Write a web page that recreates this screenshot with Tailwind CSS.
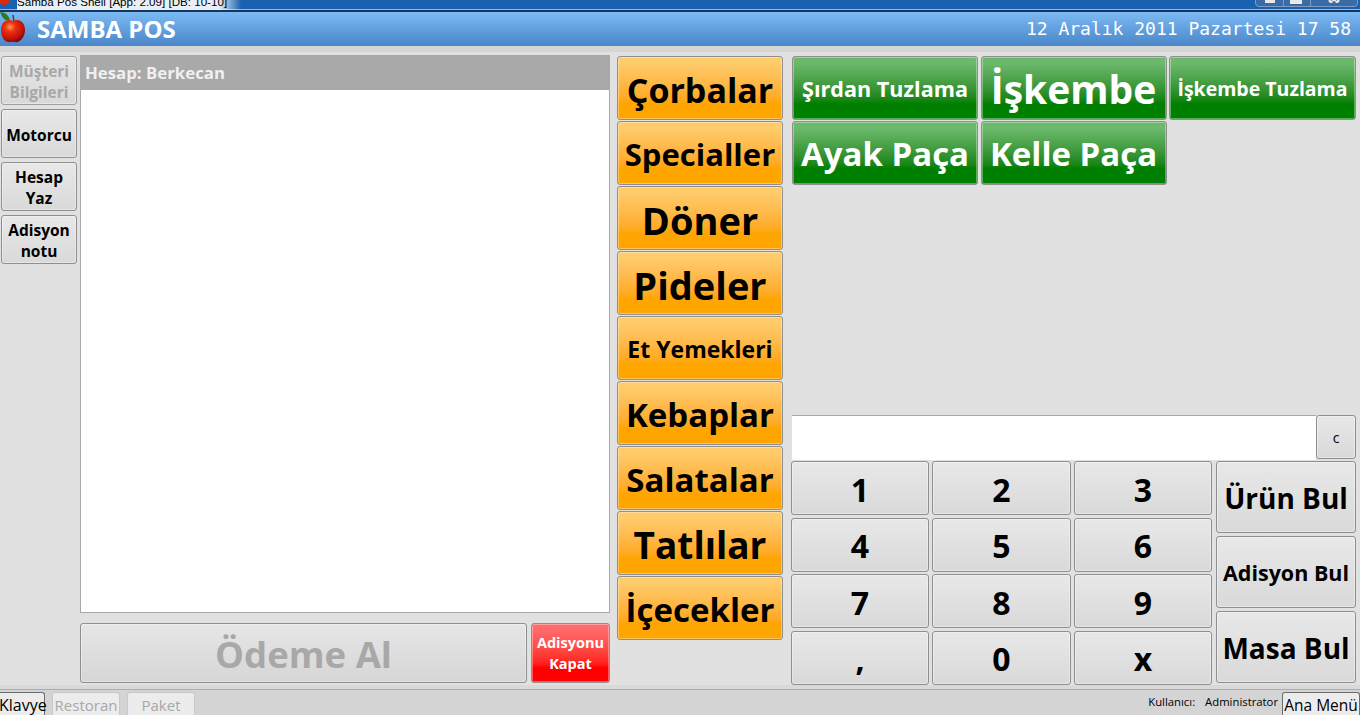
<!DOCTYPE html>
<html lang="tr">
<head>
  <meta charset="UTF-8" />
  <title>Samba POS</title>
  <script src="https://cdn.jsdelivr.net/npm/@tailwindcss/browser@4"></script>
</head>
<body class="bg-[#e1e1e1] font-['Open_Sans','Noto_Sans',sans-serif] overflow-hidden">
<div class="w-[1360px] h-[715px] flex flex-col overflow-hidden">

  <!-- window title, cut off by the capture -->
  <div class="h-[12px] shrink-0 flex justify-between overflow-hidden bg-[#1a62b0] border-b-2 border-[#16365f] shadow-[inset_0_-1px_0_#8fb8e0]">
    <div class="flex">
      <svg class="w-[17px] h-[9px] shrink-0" viewBox="0 0 17 9"><circle cx="4" cy="-1" r="6" fill="#d82a10"/></svg>
      <span class="-mt-[5px] h-[16px] pr-[14px] text-[11.6px] leading-[14px] text-black font-['Liberation_Sans',sans-serif] bg-gradient-to-r from-[#eaf0f6] from-90% to-transparent">Samba Pos Shell [App: 2.09] [DB: 10-10]</span>
    </div>
    <div class="flex h-[8px] mr-[2px] -mt-[1px] border border-[#7d9cc0] rounded-b-[4px] bg-[#3a6ba6]">
      <div class="w-[28px] pl-[9px] border-r border-[#7d9cc0]"><div class="w-[10px] h-[3px] bg-[#e8e8e8]"></div></div>
      <div class="w-[27px] pl-[6px] border-r border-[#7d9cc0]"><div class="w-[12px] h-[4px] bg-[#e8e8e8]"></div></div>
      <div class="w-[46px] flex justify-center">
        <svg class="w-[12px] h-[3px]" viewBox="0 0 12 3"><path d="M1 0 L4 3 M11 0 L8 3 M4 0 H8" stroke="#e8e8e8" stroke-width="2.500"/></svg>
      </div>
    </div>
  </div>

  <!-- header -->
  <header class="h-[34px] shrink-0 flex items-center justify-between bg-gradient-to-b from-[#7cbaf4] to-[#4a86c8]">
    <div class="flex items-center">
      <svg class="w-[26px] h-[33px] -mt-[3px]" viewBox="0 0 26 33">
        <defs>
          <radialGradient id="apple" cx="38%" cy="32%" r="72%">
            <stop offset="0" stop-color="#ff9a50"/><stop offset="0.3" stop-color="#ee3010"/><stop offset="0.75" stop-color="#c01208"/><stop offset="1" stop-color="#7a0606"/>
          </radialGradient>
        </defs>
        <path d="M0 1 C5 1 9 4 10 10 C5 10 2 7 0 1Z" fill="#2e7a22"/>
        <path d="M13 4 L14 11" stroke="#5a3a10" stroke-width="1.500"/>
        <path d="M13 10 C18 7 25 10 25 19 C25 27 19 32 15 31 C13 30.500 12 30.500 10 31 C5 32 1 26 1 19 C1 10 8 7 13 10Z" fill="url(#apple)"/>
      </svg>
      <span class="ml-[11px] text-[24px] font-bold text-white leading-none">SAMBA POS</span>
    </div>
    <span class="pr-[9px] text-[18px] text-white font-['DejaVu_Sans_Mono',monospace] leading-none">12 Aralık 2011 Pazartesi 17 58</span>
  </header>

  <!-- main -->
  <main class="h-[643px] shrink-0 flex pt-[3px] border-t-[6px] border-b-[4px] border-t-[#d6d6d6] border-b-[#d9d9d9]">

    <!-- side buttons -->
    <div class="w-[78px] shrink-0 pl-[1px] pt-[1px] flex flex-col gap-[4px]">
      <button class="w-[76px] h-[49px] pt-[3px] rounded-[3px] border border-[#a0a0a0] bg-gradient-to-b from-[#e6e6e6] to-[#d9d9d9] shadow-[inset_0_0_0_1px_rgba(255,255,255,0.35)] text-[15.5px] leading-[21px] font-bold text-[#a8a8a8]">Müşteri Bilgileri</button>
      <button class="w-[76px] h-[49px] pt-[3px] rounded-[3px] border border-[#8f8f8f] bg-gradient-to-b from-[#e8e8e8] to-[#d9d9d9] shadow-[inset_0_0_0_1px_rgba(255,255,255,0.35)] text-[15.5px] leading-[21px] font-bold text-black">Motorcu</button>
      <button class="w-[76px] h-[49px] pt-[3px] rounded-[3px] border border-[#8f8f8f] bg-gradient-to-b from-[#e8e8e8] to-[#d9d9d9] shadow-[inset_0_0_0_1px_rgba(255,255,255,0.35)] text-[15.5px] leading-[21px] font-bold text-black">Hesap<br>Yaz</button>
      <button class="w-[76px] h-[49px] pt-[3px] rounded-[3px] border border-[#8f8f8f] bg-gradient-to-b from-[#e8e8e8] to-[#d9d9d9] shadow-[inset_0_0_0_1px_rgba(255,255,255,0.35)] text-[15.5px] leading-[21px] font-bold text-black">Adisyon<br>notu</button>
    </div>

    <!-- ticket -->
    <section class="w-[530px] ml-[2px] shrink-0 flex flex-col">
      <div class="h-[35px] shrink-0 flex items-center pl-[5px] bg-[#a9a9a9] text-[16.8px] font-bold text-[#f0f0f0]">Hesap: Berkecan</div>
      <div class="h-[523px] shrink-0 bg-white border border-t-0 border-[#a9a9a9]"></div>
      <div class="mt-[10px] flex gap-[4px]">
        <button class="w-[447px] h-[60px] pt-[3px] rounded-[3px] border border-[#8f8f8f] bg-gradient-to-b from-[#e6e6e6] to-[#d6d6d6] shadow-[inset_0_0_0_1px_rgba(255,255,255,0.35)] text-[36.5px] font-bold text-[#a8a8a8]">Ödeme Al</button>
        <button class="w-[79px] h-[60px] rounded-[3px] border border-[#8f8f8f] bg-gradient-to-b from-[#ff6a6a] from-10% to-[#ff0000] to-75% shadow-[inset_0_0_0_1px_rgba(255,255,255,0.35)] text-[14.5px] leading-[21px] font-bold text-white">Adisyonu Kapat</button>
      </div>
    </section>

    <!-- categories -->
    <div class="w-[166px] ml-[7px] pt-[1px] shrink-0 grid grid-rows-[repeat(9,64px)] gap-y-[1px] h-[585px]">
      <button class="pt-[4px] rounded-[3px] border border-[#8f8f8f] bg-gradient-to-b from-[#ffcb6b] from-10% to-[#ffa500] to-75% shadow-[inset_0_0_0_1px_rgba(255,255,255,0.35)] text-[34px] font-bold text-black">Çorbalar</button>
      <button class="pt-[2px] rounded-[3px] border border-[#8f8f8f] bg-gradient-to-b from-[#ffcb6b] from-10% to-[#ffa500] to-75% shadow-[inset_0_0_0_1px_rgba(255,255,255,0.35)] text-[31px] font-bold text-black">Specialler</button>
      <button class="pt-[4px] rounded-[3px] border border-[#8f8f8f] bg-gradient-to-b from-[#ffcb6b] from-10% to-[#ffa500] to-75% shadow-[inset_0_0_0_1px_rgba(255,255,255,0.35)] text-[38px] font-bold text-black">Döner</button>
      <button class="pt-[4px] rounded-[3px] border border-[#8f8f8f] bg-gradient-to-b from-[#ffcb6b] from-10% to-[#ffa500] to-75% shadow-[inset_0_0_0_1px_rgba(255,255,255,0.35)] text-[38px] font-bold text-black">Pideler</button>
      <button class="pt-[2px] rounded-[3px] border border-[#8f8f8f] bg-gradient-to-b from-[#ffcb6b] from-10% to-[#ffa500] to-75% shadow-[inset_0_0_0_1px_rgba(255,255,255,0.35)] text-[23px] font-bold text-black">Et Yemekleri</button>
      <button class="pt-[3px] rounded-[3px] border border-[#8f8f8f] bg-gradient-to-b from-[#ffcb6b] from-10% to-[#ffa500] to-75% shadow-[inset_0_0_0_1px_rgba(255,255,255,0.35)] text-[33px] font-bold text-black">Kebaplar</button>
      <button class="pt-[3px] rounded-[3px] border border-[#8f8f8f] bg-gradient-to-b from-[#ffcb6b] from-10% to-[#ffa500] to-75% shadow-[inset_0_0_0_1px_rgba(255,255,255,0.35)] text-[33px] font-bold text-black">Salatalar</button>
      <button class="pt-[4px] rounded-[3px] border border-[#8f8f8f] bg-gradient-to-b from-[#ffcb6b] from-10% to-[#ffa500] to-75% shadow-[inset_0_0_0_1px_rgba(255,255,255,0.35)] text-[37px] font-bold text-black">Tatlılar</button>
      <button class="pt-[3px] rounded-[3px] border border-[#8f8f8f] bg-gradient-to-b from-[#ffcb6b] from-10% to-[#ffa500] to-75% shadow-[inset_0_0_0_1px_rgba(255,255,255,0.35)] text-[33px] font-bold text-black">İçecekler</button>
    </div>

    <!-- products and keypad -->
    <div class="w-[566px] ml-[8px] shrink-0 flex flex-col">
      <div class="h-[360px] shrink-0 pl-[1px] pt-[1px] grid grid-cols-[186px_186px_187px] grid-rows-[64px_64px] gap-x-[2.5px] gap-y-[1px] content-start">
        <button class="pt-[2px] rounded-[3px] border border-[#8f8f8f] bg-gradient-to-b from-[#6cb96c] from-10% to-[#008000] to-75% shadow-[inset_0_0_0_1px_rgba(255,255,255,0.35)] text-[21.6px] font-bold text-white">Şırdan Tuzlama</button>
        <button class="pt-[3px] rounded-[3px] border border-[#8f8f8f] bg-gradient-to-b from-[#6cb96c] from-10% to-[#008000] to-75% shadow-[inset_0_0_0_1px_rgba(255,255,255,0.35)] text-[39px] font-bold text-white">İşkembe</button>
        <button class="pt-[1px] rounded-[3px] border border-[#8f8f8f] bg-gradient-to-b from-[#6cb96c] from-10% to-[#008000] to-75% shadow-[inset_0_0_0_1px_rgba(255,255,255,0.35)] text-[19.5px] font-bold text-white">İşkembe Tuzlama</button>
        <button class="pt-[2px] rounded-[3px] border border-[#8f8f8f] bg-gradient-to-b from-[#6cb96c] from-10% to-[#008000] to-75% shadow-[inset_0_0_0_1px_rgba(255,255,255,0.35)] text-[33px] font-bold text-white">Ayak Paça</button>
        <button class="pt-[2px] rounded-[3px] border border-[#8f8f8f] bg-gradient-to-b from-[#6cb96c] from-10% to-[#008000] to-75% shadow-[inset_0_0_0_1px_rgba(255,255,255,0.35)] text-[33px] font-bold text-white">Kelle Paça</button>
      </div>
      <div class="h-[46px] shrink-0 flex pl-[1px]">
        <div class="w-[524px] h-[45px] bg-white border-t border-[#a9a9a9]"></div>
        <button class="w-[40px] h-[44px] rounded-[3px] border border-[#8f8f8f] bg-gradient-to-b from-[#e8e8e8] to-[#d9d9d9] shadow-[inset_0_0_0_1px_rgba(255,255,255,0.35)] text-[14px] text-black">c</button>
      </div>
      <div class="flex gap-[4px]">
        <div class="h-[223px] grid grid-cols-[138px_139px_138px] grid-rows-[repeat(4,54px)] gap-x-[3px] gap-y-[2.5px]">
          <button class="pt-[3px] rounded-[3px] border border-[#8f8f8f] bg-gradient-to-b from-[#e8e8e8] to-[#d9d9d9] shadow-[inset_0_0_0_1px_rgba(255,255,255,0.35)] text-[32px] font-bold text-black">1</button>
          <button class="pt-[3px] rounded-[3px] border border-[#8f8f8f] bg-gradient-to-b from-[#e8e8e8] to-[#d9d9d9] shadow-[inset_0_0_0_1px_rgba(255,255,255,0.35)] text-[32px] font-bold text-black">2</button>
          <button class="pt-[3px] rounded-[3px] border border-[#8f8f8f] bg-gradient-to-b from-[#e8e8e8] to-[#d9d9d9] shadow-[inset_0_0_0_1px_rgba(255,255,255,0.35)] text-[32px] font-bold text-black">3</button>
          <button class="pt-[3px] rounded-[3px] border border-[#8f8f8f] bg-gradient-to-b from-[#e8e8e8] to-[#d9d9d9] shadow-[inset_0_0_0_1px_rgba(255,255,255,0.35)] text-[32px] font-bold text-black">4</button>
          <button class="pt-[3px] rounded-[3px] border border-[#8f8f8f] bg-gradient-to-b from-[#e8e8e8] to-[#d9d9d9] shadow-[inset_0_0_0_1px_rgba(255,255,255,0.35)] text-[32px] font-bold text-black">5</button>
          <button class="pt-[3px] rounded-[3px] border border-[#8f8f8f] bg-gradient-to-b from-[#e8e8e8] to-[#d9d9d9] shadow-[inset_0_0_0_1px_rgba(255,255,255,0.35)] text-[32px] font-bold text-black">6</button>
          <button class="pt-[3px] rounded-[3px] border border-[#8f8f8f] bg-gradient-to-b from-[#e8e8e8] to-[#d9d9d9] shadow-[inset_0_0_0_1px_rgba(255,255,255,0.35)] text-[32px] font-bold text-black">7</button>
          <button class="pt-[3px] rounded-[3px] border border-[#8f8f8f] bg-gradient-to-b from-[#e8e8e8] to-[#d9d9d9] shadow-[inset_0_0_0_1px_rgba(255,255,255,0.35)] text-[32px] font-bold text-black">8</button>
          <button class="pt-[3px] rounded-[3px] border border-[#8f8f8f] bg-gradient-to-b from-[#e8e8e8] to-[#d9d9d9] shadow-[inset_0_0_0_1px_rgba(255,255,255,0.35)] text-[32px] font-bold text-black">9</button>
          <button class="pt-[3px] rounded-[3px] border border-[#8f8f8f] bg-gradient-to-b from-[#e8e8e8] to-[#d9d9d9] shadow-[inset_0_0_0_1px_rgba(255,255,255,0.35)] text-[32px] font-bold text-black">,</button>
          <button class="pt-[3px] rounded-[3px] border border-[#8f8f8f] bg-gradient-to-b from-[#e8e8e8] to-[#d9d9d9] shadow-[inset_0_0_0_1px_rgba(255,255,255,0.35)] text-[32px] font-bold text-black">0</button>
          <button class="pt-[3px] rounded-[3px] border border-[#8f8f8f] bg-gradient-to-b from-[#e8e8e8] to-[#d9d9d9] shadow-[inset_0_0_0_1px_rgba(255,255,255,0.35)] text-[32px] font-bold text-black">x</button>
        </div>
        <div class="w-[140px] h-[223px] flex flex-col gap-[3px]">
          <button class="h-[72px] pt-[2px] rounded-[3px] border border-[#8f8f8f] bg-gradient-to-b from-[#e8e8e8] to-[#d9d9d9] shadow-[inset_0_0_0_1px_rgba(255,255,255,0.35)] text-[28px] font-bold text-black">Ürün Bul</button>
          <button class="h-[72px] pt-[2px] rounded-[3px] border border-[#8f8f8f] bg-gradient-to-b from-[#e8e8e8] to-[#d9d9d9] shadow-[inset_0_0_0_1px_rgba(255,255,255,0.35)] text-[21.5px] font-bold text-black">Adisyon Bul</button>
          <button class="h-[72px] pt-[2px] rounded-[3px] border border-[#8f8f8f] bg-gradient-to-b from-[#e8e8e8] to-[#d9d9d9] shadow-[inset_0_0_0_1px_rgba(255,255,255,0.35)] text-[28px] font-bold text-black">Masa Bul</button>
        </div>
      </div>
    </div>
  </main>

  <!-- bottom bar -->
  <footer class="h-[26px] shrink-0 flex items-end justify-between bg-[#d4d4d4] border-t border-[#9fb0c4] overflow-hidden">
    <div class="flex items-end -ml-[2px]">
      <button class="w-[47px] h-[23px] rounded-t-[3px] border border-b-0 border-[#6e6e6e] bg-[#ececec] text-[16px] leading-[24px] text-black">Klavye</button>
      <button class="ml-[7px] w-[68px] h-[23px] rounded-t-[3px] border border-b-0 border-[#c8c8c8] bg-[#ececec] text-[15px] leading-[24px] text-[#a8a8a8]">Restoran</button>
      <button class="ml-[7px] w-[68px] h-[23px] rounded-t-[3px] border border-b-0 border-[#c8c8c8] bg-[#ececec] text-[15px] leading-[24px] text-[#a8a8a8]">Paket</button>
    </div>
    <div class="flex items-end">
      <span class="text-[11.3px] leading-[27px] text-black">Kullanıcı:</span>
      <span class="ml-[10px] text-[11.3px] leading-[27px] text-black">Administrator</span>
      <button class="ml-[4px] w-[78px] h-[23px] rounded-t-[3px] border border-b-0 border-[#6e6e6e] bg-[#ececec] text-[15.5px] leading-[24px] text-black">Ana Menü</button>
    </div>
  </footer>
</div>
</body>
</html>
